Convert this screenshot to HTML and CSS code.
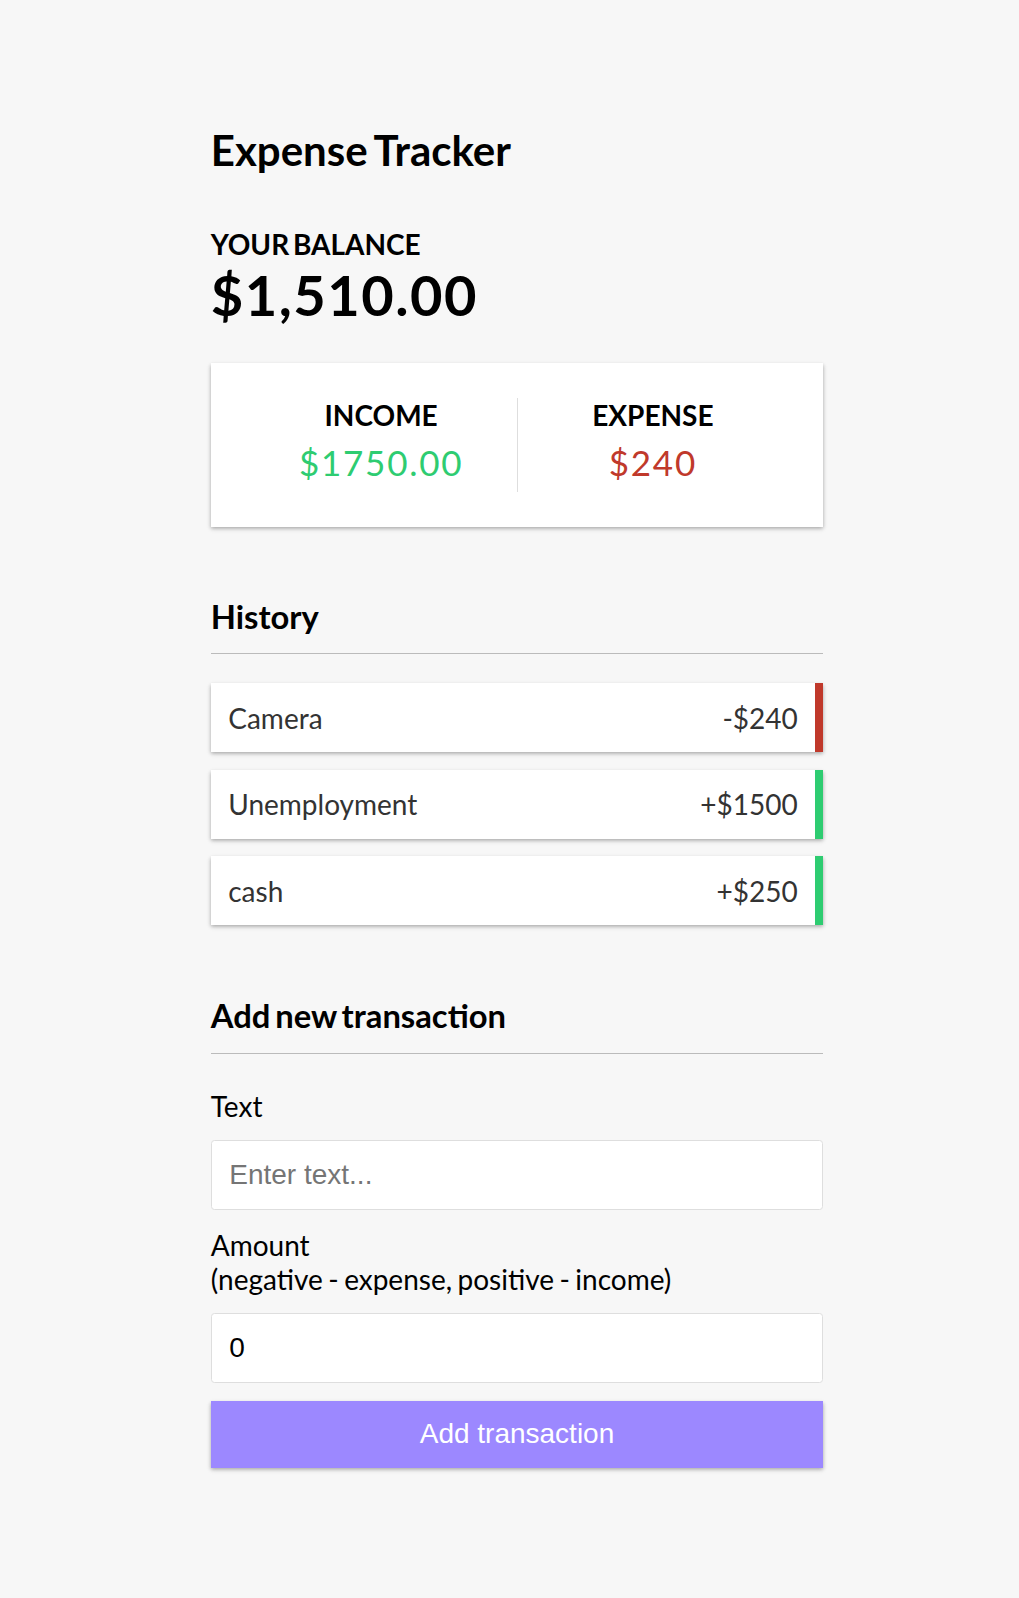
FILE: index.html
```html
<!DOCTYPE html>
<html lang="en">
<head>
<meta charset="UTF-8">
<title>Expense Tracker</title>
<link rel="stylesheet" href="styles.css">
</head>
<body>
  <div class="root">
    <h2 class="title">Expense Tracker</h2>
    <div class="container">
      <h4>Your Balance</h4>
      <h1 class="balance">$1,510.00</h1>

      <div class="inc-exp-container">
        <div class="inc">
          <h4>Income</h4>
          <p class="money plus">$1750.00</p>
        </div>
        <div class="exp">
          <h4>Expense</h4>
          <p class="money minus">$240</p>
        </div>
      </div>

      <h3 class="section">History</h3>
      <ul class="list">
        <li class="minus">Camera <span>-$240</span></li>
        <li class="plus">Unemployment <span>+$1500</span></li>
        <li class="plus">cash <span>+$250</span></li>
      </ul>

      <h3 class="section">Add new transaction</h3>
      <form class="form">
        <div class="form-control">
          <label for="text">Text</label>
          <input type="text" id="text" placeholder="Enter text...">
        </div>
        <div class="form-control">
          <label for="amount">Amount <br>(negative - expense, positive - income)</label>
          <input type="number" id="amount" placeholder="Enter amount..." value="0">
        </div>
        <button class="btn" type="button">Add transaction</button>
      </form>
    </div>
  </div>
</body>
</html>
```

FILE: styles.css
```css
* {
  box-sizing: border-box;
}

body {
  background-color: #f7f7f7;
  display: flex;
  flex-direction: column;
  align-items: center;
  justify-content: center;
  min-height: 100vh;
  margin: 0;
  padding-left: 15px;
  padding-top: 12px;
  font-family: "Lato", "Liberation Sans", sans-serif;
  font-size: 28px;
}

.root {
  width: 612.5px;
}

.title {
  font-size: 42px;
  margin: 34.86px 0;
  word-spacing: -3px;
}

.container {
  margin: 52.5px auto;
  width: 612.5px;
}

h1 {
  letter-spacing: 1.5px;
  margin: 0;
  font-size: 56px;
}

.section {
  font-size: 32.76px;
  border-bottom: 1.75px solid #bbb;
  padding-bottom: 17.5px;
  margin: 70px 0 17.5px;
  word-spacing: -3px;
}

h4 {
  margin: 0;
  text-transform: uppercase;
  font-size: 28px;
  word-spacing: -3px;
}

.inc-exp-container {
  background-color: #fff;
  box-shadow: 0 1.75px 5.25px rgba(0, 0, 0, 0.12), 0 1.75px 3.5px rgba(0, 0, 0, 0.24);
  padding: 35px;
  display: flex;
  justify-content: space-between;
  margin: 35px 0;
}

.inc-exp-container > div {
  flex: 1;
  text-align: center;
}

.inc-exp-container > .inc {
  border-right: 1.75px solid #dedede;
}

.money {
  font-size: 35px;
  letter-spacing: 1.75px;
  margin: 8.75px 0;
}

.money.plus {
  color: #2ecc71;
}

.money.minus {
  color: #c0392b;
}

label {
  display: inline-block;
  margin: 17.5px 0;
  word-spacing: -1.7px;
}

input {
  border: 1.75px solid #dedede;
  border-radius: 3.5px;
  display: block;
  font-family: "Liberation Sans", Arial, sans-serif;
  font-size: 28px;
  padding: 17.5px;
  width: 100%;
  height: 70px;
  background: #fff;
  color: #000;
}

input::placeholder {
  color: #757575;
}

.btn {
  cursor: pointer;
  background-color: #9c88ff;
  box-shadow: 0 1.75px 5.25px rgba(0, 0, 0, 0.12), 0 1.75px 3.5px rgba(0, 0, 0, 0.24);
  color: #fff;
  border: 0;
  display: block;
  font-family: "Liberation Sans", Arial, sans-serif;
  font-size: 28px;
  margin: 17.5px 0 52.5px;
  padding: 17.5px;
  width: 100%;
}

.list {
  list-style-type: none;
  padding: 0;
  margin: 29px 0 71px;
}

.list li {
  background-color: #fff;
  box-shadow: 0 1.75px 5.25px rgba(0, 0, 0, 0.12), 0 1.75px 3.5px rgba(0, 0, 0, 0.24);
  color: #333;
  display: flex;
  justify-content: space-between;
  padding: 17.5px;
  margin: 17.5px 0;
}

.list li.plus {
  border-right: 8.75px solid #2ecc71;
}

.list li.minus {
  border-right: 8.75px solid #c0392b;
}
```
